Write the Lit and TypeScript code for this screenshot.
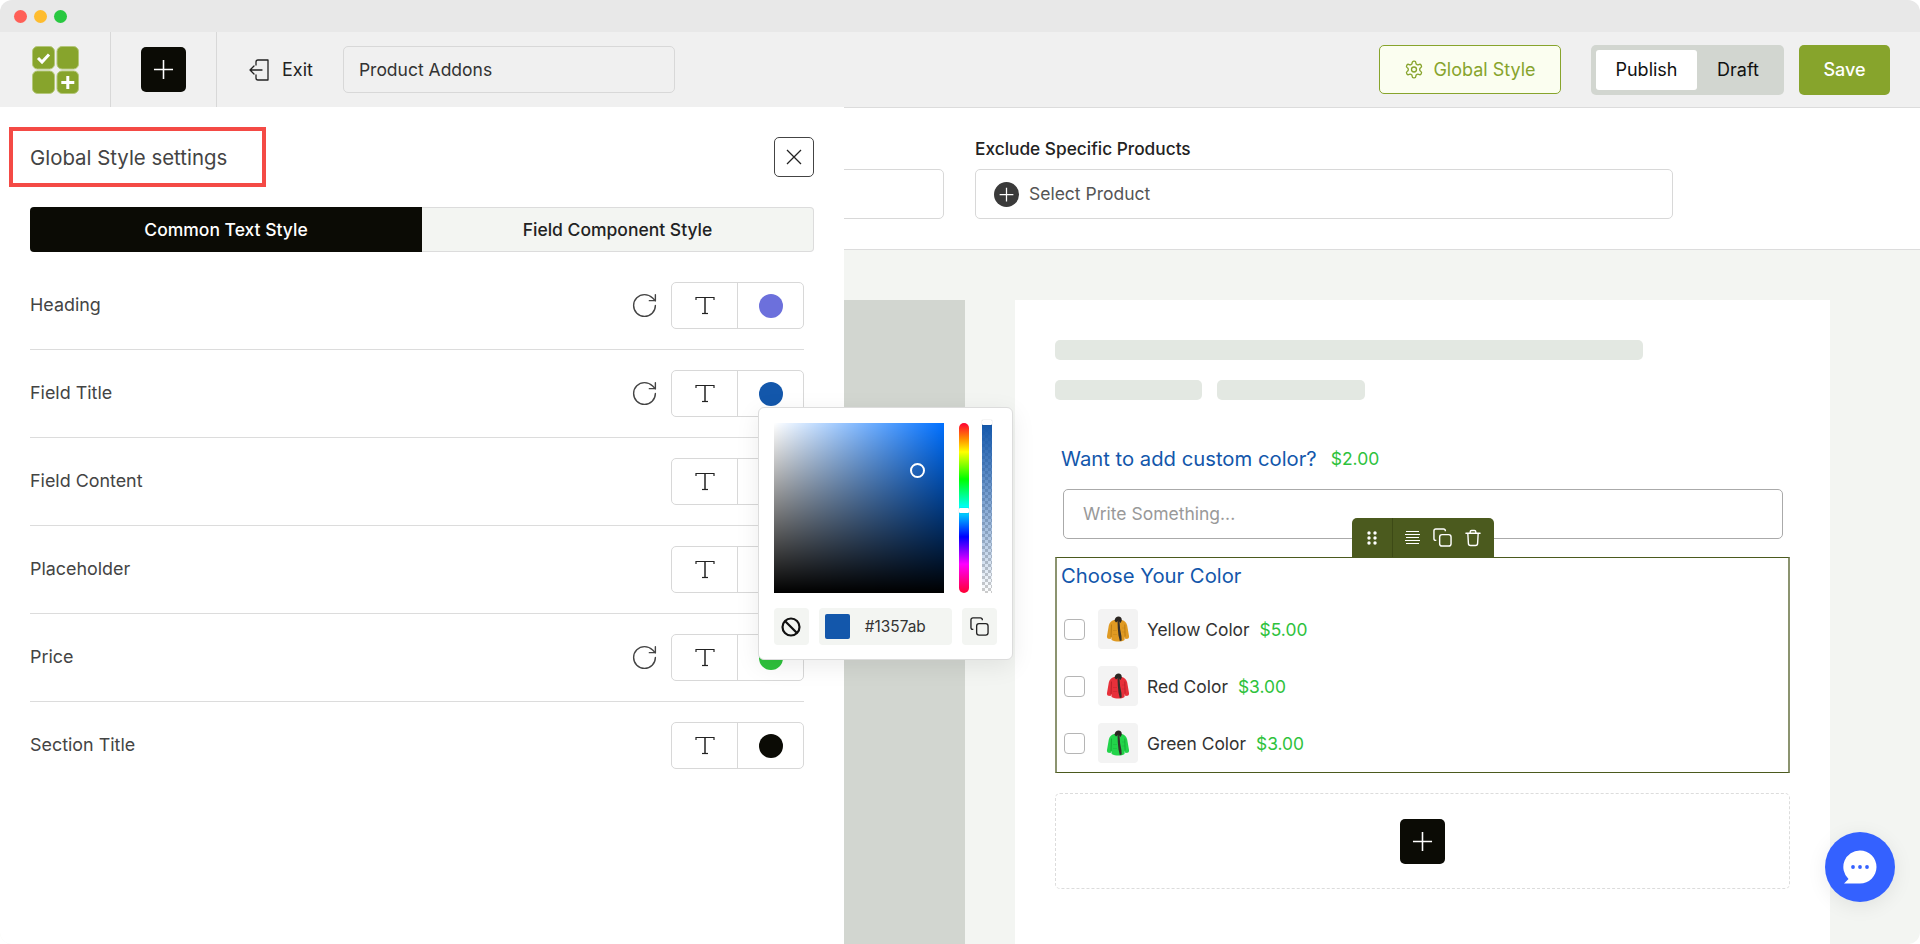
import { LitElement, html, css } from "lit";
import { customElement } from "lit/decorators.js";

const plusIcon = (size: number, color = "#fff", w = 1.8) => html`<svg width=${size} height=${size} viewBox="0 0 24 24" fill="none" stroke=${color} stroke-width=${w} stroke-linecap="square"><path d="M12 2v20M2 12h20"/></svg>`;

const jacket = (main: string, shade: string) => html`<svg width="24" height="27" viewBox="0 0 24 27">
  <path d="M8 4C5.300 5 3.500 6.500 2.800 9.500L1 20c-.2 1.500.2 2.500 1.500 2.800l2.200.2.600-2 .3 3c2 1 4.500 1.500 6.900 1.500 2.300 0 4.500-.5 6-1.500l.3-3 .6 2 2.100-.2c1.300-.3 1.700-1.300 1.500-2.800L21.200 9.500C20.500 6.500 18.700 5 16 4Z" fill=${main}/>
  <path d="M5.500 8.500 5 21M18.800 8.500l.3 12" stroke=${shade} stroke-width=".9" fill="none"/>
  <path d="M7 14.500h4M7 18.500h4M16 12h3M16 16h3" stroke=${shade} stroke-width=".5" fill="none" opacity=".7"/>
  <path d="M8.500 4.500C9 2 10.500.5 12.500.5S16 2 15.800 4.500L14.500 7 12.300 4.800 10 6.500Z" fill="#2b2622"/>
  <path d="M11.500 5h2l.6 8 1.300 7 .3 4.500-1.900.6-1.300-5.500-.7-7Z" fill="#35302b"/>
</svg>`;

const resetIcon = html`<svg width="29" height="29" viewBox="0 0 24 24" fill="none" stroke="#444" stroke-width="1.150" stroke-linecap="round" stroke-linejoin="round"><path d="M21 12a9 9 0 1 1-9-9c2.520 0 4.930 1 6.740 2.740L21 8"/><path d="M21 3v5h-5"/></svg>`;

const tIcon = html`<svg width="20" height="19" viewBox="0 0 20 19" fill="none" stroke="#222" stroke-width="1.200"><path d="M1 4V1.500h18V4"/><path d="M10 1.500V17.500" stroke-width="1.500"/><path d="M7 17.500h6"/></svg>`;

const copyIcon = (color: string, size = 20, w = 1.6) => html`<svg width=${size} height=${size} viewBox="0 0 20 20" fill="none" stroke=${color} stroke-width=${w} stroke-linejoin="round"><rect x="7" y="7" width="12" height="12" rx="2.500"/><path d="M13 3.500V3a2 2 0 0 0-2-2H3a2 2 0 0 0-2 2v8a2 2 0 0 0 2 2h.5"/></svg>`;

type Row = { name: string; color: string; reset: boolean };
const rows: Row[] = [
  { name: "Heading", color: "#6c70dc", reset: true },
  { name: "Field Title", color: "#1357ab", reset: true },
  { name: "Field Content", color: "#333333", reset: false },
  { name: "Placeholder", color: "#999999", reset: false },
  { name: "Price", color: "#2ec23c", reset: true },
  { name: "Section Title", color: "#0b0b05", reset: false },
];

const options = [
  { label: "Yellow Color", price: "$5.00", main: "#e09a22", shade: "#b87a14" },
  { label: "Red Color", price: "$3.00", main: "#e7303a", shade: "#b81f28" },
  { label: "Green Color", price: "$3.00", main: "#22d44a", shade: "#15a836" },
];

@customElement("app-root")
export class AppRoot extends LitElement {
  static styles = css`
    :host { display: block; width: 1920px; height: 944px; overflow: hidden; background: #fff; border-radius: 12px; font-family: Inter, "Liberation Sans", sans-serif; color: #333; position: relative; }
    * { box-sizing: border-box; }
    .titlebar { height: 32px; background: #e8e8e8; display: flex; align-items: center; gap: 7px; padding-left: 13.5px; }
    .light { width: 13px; height: 13px; border-radius: 50%; }
    .toolbar { height: 76px; background: #f0f0f0; display: flex; align-items: center; border-bottom: 1px solid #dcdcdc; padding-right: 30px; }
    .cell { height: 75px; display: flex; align-items: center; justify-content: center; border-right: 1px solid #d8d8d8; }
    .logo-cell { width: 111px; }
    .plus-cell { width: 106px; }
    .plus-btn { width: 45px; height: 45px; border-radius: 5px; background: #0b0b05; display: flex; align-items: center; justify-content: center; }
    .exit { display: flex; align-items: center; gap: 12px; margin-left: 32px; font-size: 18px; color: #222; }
    .name { margin-left: 30px; width: 332px; height: 47px; border: 1px solid #d8d8d8; border-radius: 5px; padding-left: 15px; display: flex; align-items: center; font-size: 17.5px; color: #333; background: #f0f0f0; }
    .spacer { flex: 1; }
    .global { width: 182px; height: 49px; border: 1px solid #87a42c; border-radius: 5px; background: #fbfef0; color: #87a42c; display: flex; align-items: center; justify-content: center; gap: 9px; font-size: 18px; }
    .status { margin-left: 30px; width: 193px; height: 50px; border-radius: 5px; background: #d2d6d0; padding: 5px; display: flex; align-items: center; font-size: 18px; color: #111; }
    .pub { width: 101px; height: 40px; border-radius: 3px; background: #fff; display: flex; align-items: center; justify-content: center; }
    .dra { flex: 1; text-align: center; }
    .save { margin-left: 15px; width: 91px; height: 50px; border-radius: 5px; background: #87a42c; color: #fff; display: flex; align-items: center; justify-content: center; font-size: 18px; font-weight: 500; }

    .body { position: relative; height: 836px; }
    .top { height: 142px; background: #fff; border-bottom: 1px solid #dcdcdc; display: flex; gap: 31px; padding-left: 246px; padding-top: 31px; }
    .field { width: 698px; }
    .field label { display: block; font-size: 17.3px; font-weight: 500; color: #222; line-height: 20px; margin-bottom: 10px; height: 20px; }
    .select { height: 50px; border: 1px solid #d8d8d8; border-radius: 5px; display: flex; align-items: center; gap: 10px; padding-left: 18px; font-size: 17.5px; color: #555; }
    .select-text { padding-bottom: 2px; }
    .select-plus { width: 25px; height: 25px; border-radius: 50%; background: #3a3a3a; display: flex; align-items: center; justify-content: center; }
    .canvas { height: 694px; background: #f3f5f2; display: flex; padding: 50px 0 0 90px; gap: 50px; }
    .side { width: 875px; background: #d2d6d0; }
    .card { width: 815px; background: #fff; padding: 40px 40px 0; }
    .skel { height: 20px; border-radius: 5px; background: #e3e8e2; }
    .skel.a { width: 588px; }
    .skel-row { display: flex; gap: 15px; margin-top: 20px; }
    .skel.b { width: 147px; }
    .skel.c { width: 148px; }
    .q { margin: 46px 0 0 6px; display: flex; align-items: center; gap: 14px; height: 24px; }
    .q-title { font-size: 20.25px; font-weight: 400; color: #1357ab; }
    .q-price { font-size: 17.5px; color: #2ec23c; }
    .write { margin: 19px 0 0 8px; width: 720px; height: 50px; border: 1px solid #aaa; border-radius: 5px; padding: 0 0 2px 19px; display: flex; align-items: center; font-size: 17.5px; color: #999; }
    .block { position: relative; margin: 18px 0 0; width: 735px; border: 1px solid #4b5a1e; border-left: 2px solid #8c9470; border-right: 2px solid #8c9470; padding: 6px 0 9px 4px; }
    .block-bar { position: absolute; top: -40px; left: 295px; width: 142px; height: 39px; background: #4b5a1e; border-radius: 5px 5px 0 0; display: flex; align-items: center; }
    .grip { width: 41px; height: 100%; display: flex; align-items: center; justify-content: center; border-right: 1px solid #3d4a16; }
    .bar-icons { flex: 1; display: flex; align-items: center; gap: 13px; padding-left: 12px; }
    .block-title { font-size: 20.25px; font-weight: 400; color: #1357ab; line-height: 24px; margin-bottom: 21px; }
    .opts { display: flex; flex-direction: column; gap: 17px; padding-left: 3px; }
    .opt { display: flex; align-items: center; height: 40px; font-size: 17.4px; color: #333; }
    .check { width: 21px; height: 21px; border: 1px solid #b5b5b5; border-radius: 4px; background: #fff; margin-right: 13px; }
    .thumb { width: 40px; height: 40px; border-radius: 4px; background: #f3f3f3; display: flex; align-items: center; justify-content: center; margin-right: 9px; }
    .opt-price { margin-left: 10px; color: #2ec23c; }
    .add { margin-top: 20px; width: 735px; height: 96px; border: 1px dashed #dcdcdc; border-radius: 5px; display: flex; align-items: center; justify-content: center; }

    .panel { position: absolute; left: 0; top: -1px; bottom: 0; width: 844px; background: #fff; padding-top: 20px; }
    .panel-head { display: flex; justify-content: space-between; align-items: center; padding: 0 30px 0 9px; }
    .panel-title { width: 257px; height: 60px; border: 4px solid #f44a45; padding-left: 17px; display: flex; align-items: center; font-size: 20.4px; color: #444; }
    .close { width: 40px; height: 40px; border: 1px solid #444; border-radius: 5px; display: flex; align-items: center; justify-content: center; }
    .tabs { display: flex; margin: 20px 30px 10px; height: 45px; }
    .tab { display: flex; align-items: center; justify-content: center; font-size: 17.5px; font-weight: 500; }
    .tab.on { width: 392px; background: #0b0b05; color: #fff; border-radius: 4px 0 0 4px; }
    .tab.off { flex: 1; background: #f3f5f2; color: #222; border: 1px solid #dcdcdc; border-left: 0; border-radius: 0 4px 4px 0; }
    .rows { margin: 0 40px 0 30px; }
    .row { height: 88px; border-bottom: 1px solid #dcdcdc; display: flex; align-items: center; font-size: 17.9px; color: #444; }
    .row:last-child { border-bottom-color: transparent; }
    .row-name { flex: 1; padding-bottom: 2px; }
    .reset { margin-right: 12px; display: flex; }
    .ctrl { width: 133px; height: 47px; border: 1px solid #d8d8d8; border-radius: 5px; display: flex; }
    .ctrl-t { width: 66px; display: flex; align-items: center; justify-content: center; border-right: 1px solid #d8d8d8; }
    .ctrl-c { flex: 1; display: flex; align-items: center; justify-content: center; }
    .dot { width: 24px; height: 24px; border-radius: 50%; }

    .pop { position: absolute; left: 758px; top: 299px; width: 255px; height: 253px; background: #fff; border: 1px solid #dcdcdc; border-radius: 6px; box-shadow: 0 6px 24px rgba(0,0,0,.08); padding: 15px; }
    .pop-top { display: flex; height: 170px; }
    .sat { width: 170px; height: 170px; position: relative; background: linear-gradient(to top, #000, transparent), linear-gradient(to right, #fff, #0070ff); }
    .sat-pin { position: absolute; left: 136px; top: 40px; width: 15px; height: 15px; border: 2px solid #fff; border-radius: 50%; }
    .hue { margin-left: 15px; width: 10px; height: 170px; border-radius: 5px; position: relative; background: linear-gradient(to bottom, #f03 0%, #f80 9%, #ff0 17%, #0f0 33%, #0ff 50%, #00f 67%, #f0f 83%, #f03 100%); }
    .hue-pin { position: absolute; left: 0; top: 85px; width: 10px; height: 5px; background: #fff; border-radius: 1px; box-shadow: 0 0 1px rgba(0,0,0,.4); }
    .alpha { margin-left: 13px; width: 10px; height: 170px; position: relative; background: linear-gradient(to bottom, #1357ab, rgba(19,87,171,0)), repeating-conic-gradient(#ccc 0 25%, #fff 0 50%) 0 0 / 6px 6px; }
    .alpha-pin { position: absolute; left: 0; top: -3px; width: 10px; height: 5px; background: #fff; border-radius: 1px; box-shadow: 0 0 1px rgba(0,0,0,.4); }
    .pop-bot { display: flex; align-items: center; margin-top: 15px; height: 37px; }
    .ibtn { width: 35px; height: 37px; border-radius: 4px; background: #f3f5f2; display: flex; align-items: center; justify-content: center; }
    .hex { margin: 0 10px; width: 134px; height: 37px; border-radius: 4px; background: #f3f5f2; display: flex; align-items: center; padding-left: 6px; font-size: 15.4px; color: #333; }
    .swatch { width: 25px; height: 25px; background: #1357ab; border-radius: 2px; margin-right: 15px; }

    .chat { position: absolute; left: 1825px; top: 724px; width: 70px; height: 70px; border-radius: 50%; background: #3461ff; box-shadow: 0 4px 20px rgba(0,0,0,.08); display: flex; align-items: center; justify-content: center; }
  `;

  render() {
    return html`
      <div class="titlebar">
        <span class="light" style="background:#ff5f57"></span>
        <span class="light" style="background:#febc2e"></span>
        <span class="light" style="background:#28c840"></span>
      </div>
      <header class="toolbar">
        <div class="cell logo-cell">
          <svg width="47" height="48" viewBox="0 0 47 48">
            <g fill="#87a42c" stroke="#b4c77a" stroke-width="1">
              <rect x=".5" y=".5" width="22" height="22.5" rx="5"/><rect x="25" y=".5" width="21.5" height="22.5" rx="5"/>
              <rect x=".5" y="25" width="22" height="22.5" rx="5"/><rect x="25" y="25" width="21.5" height="22.5" rx="5"/>
            </g>
            <path d="M6 12l4 4 7-7.500" fill="none" stroke="#fff" stroke-width="3"/>
            <path d="M35.800 30v13M29.300 36.500h13" fill="none" stroke="#fff" stroke-width="3"/>
          </svg>
        </div>
        <div class="cell plus-cell"><div class="plus-btn">${plusIcon(21)}</div></div>
        <div class="exit">
          <svg width="21" height="22" viewBox="0 0 21 22" fill="none" stroke="#222" stroke-width="1.3" stroke-linecap="round" stroke-linejoin="round"><path d="M7 6V3a2 2 0 0 1 2-2h10v20H9a2 2 0 0 1-2-2v-3"/><path d="M13 11H1M5 7l-4 4 4 4"/></svg>
          <span>Exit</span>
        </div>
        <div class="name">Product Addons</div>
        <div class="spacer"></div>
        <div class="global">
          <svg width="20" height="21" viewBox="0 0 24 24" fill="none" stroke="#87a42c" stroke-width="1.6" stroke-linecap="round" stroke-linejoin="round"><path d="M12.220 2h-.44a2 2 0 0 0-2 2v.180a2 2 0 0 1-1 1.730l-.43.250a2 2 0 0 1-2 0l-.150-.080a2 2 0 0 0-2.730.730l-.220.380a2 2 0 0 0 .730 2.730l.150.100a2 2 0 0 1 1 1.720v.510a2 2 0 0 1-1 1.740l-.150.090a2 2 0 0 0-.730 2.730l.220.380a2 2 0 0 0 2.730.730l.150-.080a2 2 0 0 1 2 0l.430.250a2 2 0 0 1 1 1.730V20a2 2 0 0 0 2 2h.44a2 2 0 0 0 2-2v-.180a2 2 0 0 1 1-1.730l.430-.250a2 2 0 0 1 2 0l.150.080a2 2 0 0 0 2.730-.730l.220-.390a2 2 0 0 0-.730-2.730l-.150-.080a2 2 0 0 1-1-1.740v-.500a2 2 0 0 1 1-1.740l.150-.090a2 2 0 0 0 .730-2.730l-.220-.380a2 2 0 0 0-2.730-.730l-.150.080a2 2 0 0 1-2 0l-.430-.250a2 2 0 0 1-1-1.730V4a2 2 0 0 0-2-2z"/><circle cx="12" cy="12" r="3"/></svg>
          <span>Global Style</span>
        </div>
        <div class="status"><div class="pub">Publish</div><div class="dra">Draft</div></div>
        <div class="save">Save</div>
      </header>

      <div class="body">
        <div class="top">
          <div class="field"><label>Include Products</label><div class="select"></div></div>
          <div class="field">
            <label>Exclude Specific Products</label>
            <div class="select"><span class="select-plus">${plusIcon(15, "#fff", 2)}</span><span class="select-text">Select Product</span></div>
          </div>
        </div>
        <div class="canvas">
          <div class="side"></div>
          <div class="card">
            <div class="skel a"></div>
            <div class="skel-row"><div class="skel b"></div><div class="skel c"></div></div>
            <div class="q"><span class="q-title">Want to add custom color?</span><span class="q-price">$2.00</span></div>
            <div class="write">Write Something...</div>
            <div class="block">
              <div class="block-bar">
                <div class="grip">
                  <svg width="10" height="14" viewBox="0 0 10 14" fill="#fff"><circle cx="2" cy="2" r="1.7"/><circle cx="8" cy="2" r="1.7"/><circle cx="2" cy="7" r="1.7"/><circle cx="8" cy="7" r="1.7"/><circle cx="2" cy="12" r="1.7"/><circle cx="8" cy="12" r="1.7"/></svg>
                </div>
                <div class="bar-icons">
                  <svg width="15" height="16" viewBox="0 0 15 16" stroke="#fff" stroke-width="1"><path d="M1 1.500h13M0 4.500h15M1 7.500h13M0 10.500h15M1 13.500h13" fill="none"/></svg>
                  ${copyIcon("#fff", 19, 1.5)}
                  <svg width="16" height="18" viewBox="0 0 17 18" fill="none" stroke="#fff" stroke-width="1.5" stroke-linecap="round" stroke-linejoin="round"><path d="M1 4h15M5.500 4V2.500a1.500 1.500 0 0 1 1.500-1.500h3a1.500 1.500 0 0 1 1.500 1.500V4M3 4l.6 10.500A2.500 2.500 0 0 0 6 17h5a2.500 2.500 0 0 0 2.400-2.500L14 4"/></svg>
                </div>
              </div>
              <div class="block-title">Choose Your Color</div>
              <div class="opts">
                ${options.map((o) => html`<div class="opt"><span class="check"></span><span class="thumb">${jacket(o.main, o.shade)}</span><span>${o.label}</span><span class="opt-price">${o.price}</span></div>`)}
              </div>
            </div>
            <div class="add"><div class="plus-btn">${plusIcon(21)}</div></div>
          </div>
        </div>

        <aside class="panel">
          <div class="panel-head">
            <div class="panel-title">Global Style settings</div>
            <div class="close"><svg width="18" height="18" viewBox="0 0 18 18" stroke="#222" stroke-width="1.3" fill="none"><path d="M2 2l14 14M16 2 2 16"/></svg></div>
          </div>
          <div class="tabs"><div class="tab on">Common Text Style</div><div class="tab off">Field Component Style</div></div>
          <div class="rows">
            ${rows.map((r) => html`<div class="row">
              <span class="row-name">${r.name}</span>
              ${r.reset ? html`<span class="reset">${resetIcon}</span>` : ""}
              <div class="ctrl"><div class="ctrl-t">${tIcon}</div><div class="ctrl-c"><span class="dot" style="background:${r.color}"></span></div></div>
            </div>`)}
          </div>
        </aside>

        <div class="pop">
          <div class="pop-top">
            <div class="sat"><span class="sat-pin"></span></div>
            <div class="hue"><span class="hue-pin"></span></div>
            <div class="alpha"><span class="alpha-pin"></span></div>
          </div>
          <div class="pop-bot">
            <div class="ibtn"><svg width="20" height="20" viewBox="0 0 20 20" fill="none" stroke="#111" stroke-width="2.2"><circle cx="10" cy="10" r="8.500"/><path d="M4 4l12 12"/></svg></div>
            <div class="hex"><span class="swatch"></span>#1357ab</div>
            <div class="ibtn">${copyIcon("#222", 19, 1.4)}</div>
          </div>
        </div>

        <div class="chat">
          <svg width="34" height="34" viewBox="0 0 34 34"><path d="M17 .5a16.500 16.500 0 0 1 0 33H1l4.500-4.500A16.500 16.500 0 0 1 17 .5Z" fill="#fff"/><circle cx="10" cy="17" r="1.900" fill="#3461ff"/><circle cx="17" cy="17" r="1.900" fill="#3461ff"/><circle cx="24" cy="17" r="1.900" fill="#3461ff"/></svg>
        </div>
      </div>
    `;
  }
}
